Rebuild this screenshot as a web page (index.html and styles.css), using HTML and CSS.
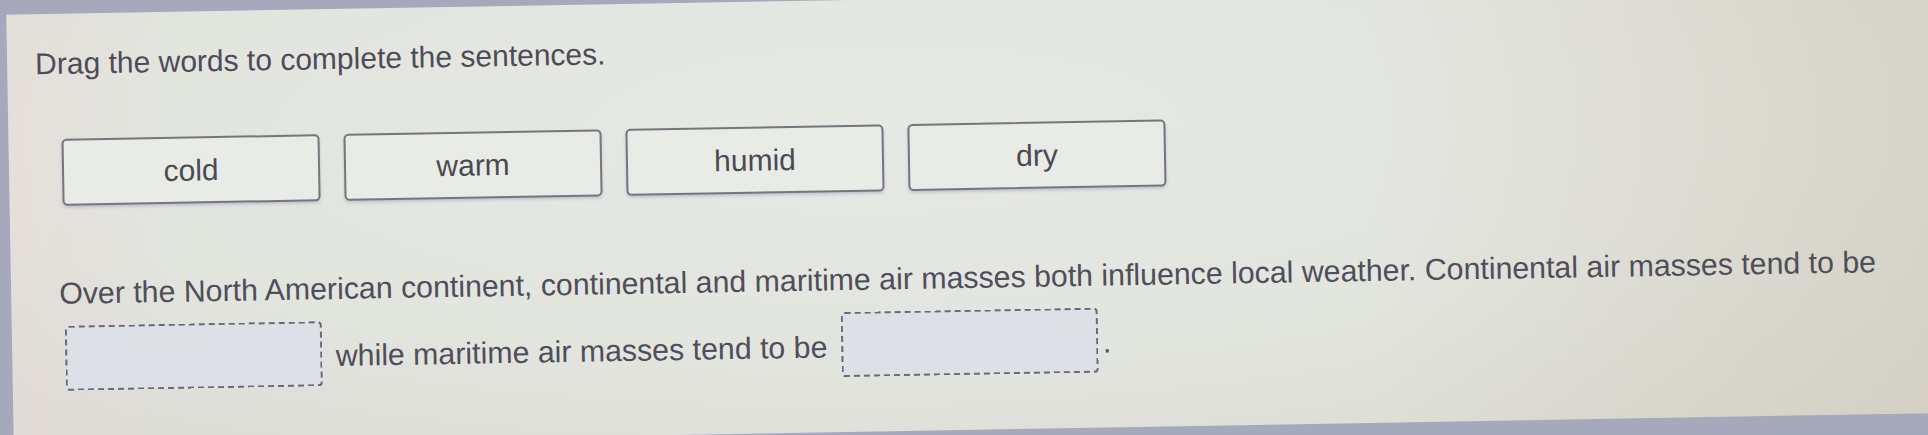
FILE: index.html
```html
<!DOCTYPE html>
<html>
<head>
    <title>Air masses</title>
    <meta http-equiv="Content-Type" content="text/html;charset=utf-8"/>
    <link rel="stylesheet" href="styles.css">
</head>
<body>
<div class="screen">
    <h1 class="prompt">Drag the words to complete the sentences.</h1>

    <div class="word_bank">
        <div class="word">cold</div>
        <div class="word">warm</div>
        <div class="word">humid</div>
        <div class="word">dry</div>
    </div>

    <p class="sentence">Over the North American continent, continental and maritime air masses both influence local weather. Continental air masses tend to be <span class="blank"></span> while maritime air masses tend to be <span class="blank"></span>.</p>
</div>
</body>
</html>
```

FILE: styles.css
```css
*{margin:0;padding:0;box-sizing:border-box;}
html,body{height:100%;overflow:hidden;}
body{
    background:#a6a8bb;
    font-family:"Liberation Sans",Arial,sans-serif;
    padding-left:10px;
}
/* the monitor is a little crooked in the shot */
.screen{
    width:1940px;
    height:432px;
    margin-top:-2px;
    padding:32px 0 0 28px;
    transform:rotate(-1deg);
    transform-origin:954px 219px;
    background:
        linear-gradient(to right, rgba(235,215,215,.35) 0, rgba(235,215,215,0) 8%),
        linear-gradient(to right, rgba(200,188,168,0) 70%, rgba(200,188,168,.35) 100%),
        radial-gradient(ellipse at 45% 30%, #e7e9e5 0%, #e2e4de 55%, #d9d9d1 100%);
}
.prompt{
    font-size:30px;
    font-weight:normal;
    line-height:36px;
    color:#4e4c58;
}
.word_bank{
    display:flex;
    gap:24px;
    margin:57px 0 0 25px;
}
.word{
    width:258px;
    height:67px;
    border:2px solid #76767e;
    border-radius:5px;
    background:#e9ebe7;
    box-shadow:0 2px 3px rgba(90,90,150,.25);
    display:flex;
    align-items:center;
    justify-content:center;
    font-size:30px;
    color:#4a4a52;
}
.sentence{
    width:1842px;
    margin:56px 0 0 20px;
    font-size:30.3px;
    line-height:64px;
    color:#4f4e5a;
}
.blank{
    display:inline-block;
    width:257px;
    height:65px;
    margin:0 5px;
    border:2px dashed #6a6a72;
    border-radius:4px;
    background:#dde0e7;
    vertical-align:-20px;
}
```
